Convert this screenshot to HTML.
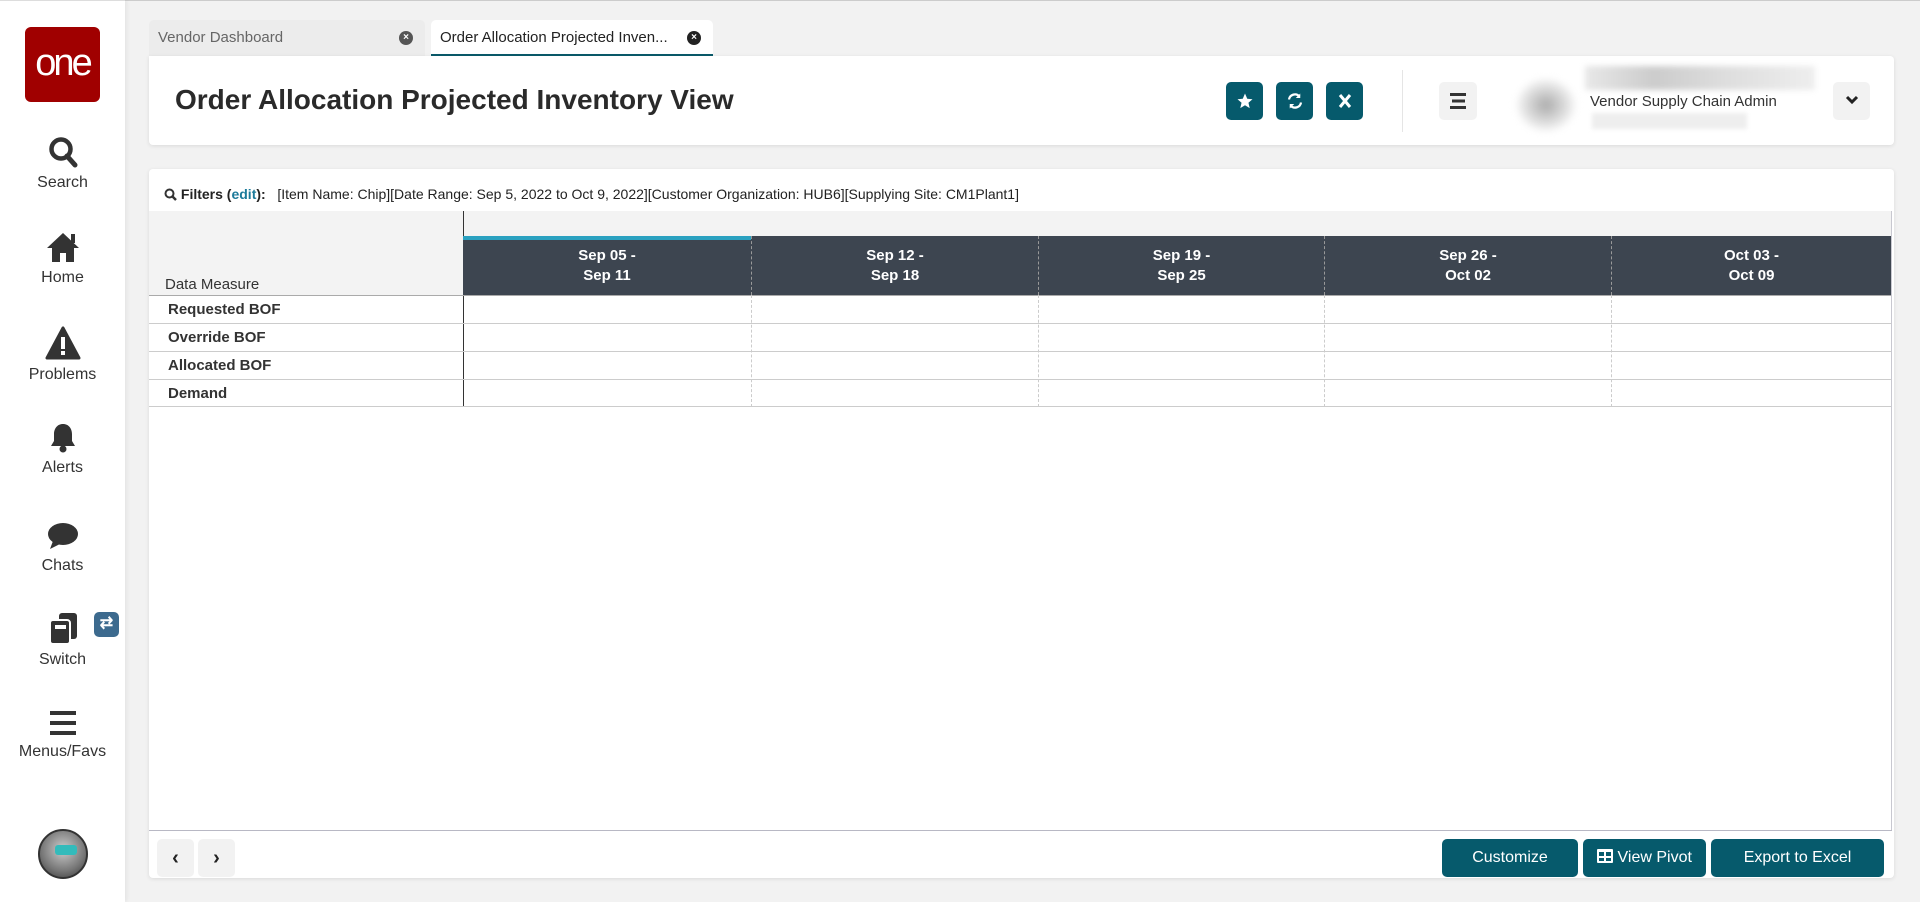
<!DOCTYPE html>
<html><head><meta charset="utf-8"><style>
*{box-sizing:border-box;margin:0;padding:0}
body{width:1920px;height:902px;background:#f2f2f2;font-family:"Liberation Sans",sans-serif;position:relative;overflow:hidden;color:#222}
.abs{position:absolute}
#side{left:0;top:0;width:125px;height:902px;background:#fff;border-top:1px solid #ddd;box-shadow:2px 0 4px rgba(0,0,0,.06)}
.logo{left:25px;top:26px;width:75px;height:75px;background:#a00000;border-radius:6px;color:#fff;font-size:38px;text-align:center;line-height:72px;letter-spacing:-3px}
.nav{left:0;width:125px;text-align:center;font-size:16px;color:#333}
.nav svg{display:block;margin:0 auto 6px}
.tab{top:20px;height:36px;border-radius:5px 5px 0 0;font-size:15px;line-height:36px;padding-left:9px;color:#666}
.x{position:absolute;right:12px;top:11px;width:14px;height:14px;border-radius:50%;background:#555;color:#fff;font-size:10px;line-height:14px;text-align:center;font-weight:bold}
.card{background:#fff;border-radius:4px;box-shadow:0 1px 4px rgba(0,0,0,.1)}
.tb{width:37px;height:38px;border-radius:5px;background:#065a6c;top:82px}
.tb svg{display:block;margin:10px auto}
.btn{top:839px;height:38px;background:#065a6c;border-radius:5px;color:#fff;font-size:16px;text-align:center;line-height:38px}
.col{top:236px;height:59px;color:#fff;font-weight:bold;font-size:15px;text-align:center;line-height:20px;padding-top:10px;border-left:1px dashed #999}
.rl{left:149px;width:1742px;height:1px;background:#ccc}
.vl{top:295px;height:112px;width:0;border-left:1px dashed #ccc}
.rt{left:168px;font-size:15px;font-weight:bold;color:#333}
</style></head><body>
<div class="abs" style="left:0;top:0;width:1920px;height:1px;background:#ccc"></div>
<div id="side" class="abs">
<div class="abs logo">one</div>
<div class="abs nav" style="top:135px"><svg width="30" height="32" viewBox="0 0 30 32"><circle cx="13" cy="13" r="9.5" fill="none" stroke="#333" stroke-width="4.5"/><path d="M19 20l8 9" stroke="#333" stroke-width="5" stroke-linecap="round"/></svg>Search</div>
<div class="abs nav" style="top:230px"><svg width="36" height="32" viewBox="0 0 36 32"><path d="M18 2L2 17h5v14h8v-9h6v9h8V17h5z" fill="#333"/><rect x="26" y="3" width="4" height="9" fill="#333"/></svg>Home</div>
<div class="abs nav" style="top:325px"><svg width="36" height="34" viewBox="0 0 36 34"><path d="M18 2L2 32h32z" fill="#333" stroke="#333" stroke-width="3" stroke-linejoin="round"/><rect x="16" y="11" width="4" height="12" fill="#fff"/><rect x="16" y="25" width="4" height="4" fill="#fff"/></svg>Problems</div>
<div class="abs nav" style="top:420px"><svg width="30" height="32" viewBox="0 0 30 32"><path d="M15 3c-6 0-9 5-9 10v7l-3 5h24l-3-5v-7c0-5-3-10-9-10z" fill="#333"/><circle cx="15" cy="28" r="3.5" fill="#333"/></svg>Alerts</div>
<div class="abs nav" style="top:520px"><svg width="32" height="30" viewBox="0 0 32 30"><ellipse cx="16" cy="13" rx="15" ry="11" fill="#333"/><path d="M6 20l-3 8 10-5z" fill="#333"/></svg>Chats</div>
<div class="abs nav" style="top:610px"><svg width="32" height="34" viewBox="0 0 32 34"><rect x="12" y="2" width="18" height="26" rx="3" fill="#333"/><rect x="3" y="9" width="20" height="24" rx="3" fill="#333" stroke="#fff" stroke-width="2"/><rect x="8" y="14" width="11" height="4" fill="#fff"/></svg>Switch</div>
<div class="abs" style="left:94px;top:611px;width:25px;height:25px;background:#3c6a8e;border-radius:5px;color:#fff;font-size:16px;text-align:center;line-height:24px;font-weight:bold">⇄</div>
<div class="abs nav" style="top:708px"><svg width="30" height="28" viewBox="0 0 30 28"><rect x="2" y="2" width="26" height="4" fill="#333"/><rect x="2" y="12" width="26" height="4" fill="#333"/><rect x="2" y="22" width="26" height="4" fill="#333"/></svg>Menus/Favs</div>
<div class="abs" style="left:38px;top:828px;width:50px;height:50px;border-radius:50%;background:radial-gradient(circle at 50% 40%,#ccc,#777 60%,#333);border:2px solid #333"><div class="abs" style="left:15px;top:14px;width:22px;height:10px;background:#3bb;border-radius:3px"></div></div>
</div>
<div class="abs tab" style="left:149px;width:276px;background:#ececec">Vendor Dashboard<span class="x">×</span></div>
<div class="abs tab" style="left:431px;width:282px;background:#fff;color:#222;border-bottom:2px solid #0a5a6a">Order Allocation Projected Inven...<span class="x" style="background:#222">×</span></div>
<div class="abs card" style="left:149px;top:56px;width:1745px;height:89px;border-radius:0 4px 4px 4px"></div>
<div class="abs" style="left:175px;top:84px;font-size:28px;font-weight:bold;color:#2a2a2a">Order Allocation Projected Inventory View</div>
<div class="abs tb" style="left:1226px"><svg width="18" height="18" viewBox="0 0 24 24"><path d="M12 2l3 7 7 .6-5.4 4.7 1.7 7.2L12 17.7 5.7 21.5l1.7-7.2L2 9.6 9 9z" fill="#fff"/></svg></div>
<div class="abs tb" style="left:1276px"><svg width="18" height="18" viewBox="0 0 24 24"><path d="M4 10a8 8 0 0 1 14-4M20 14a8 8 0 0 1-14 4" stroke="#fff" stroke-width="3" fill="none"/><path d="M19 2v6h-6zM5 22v-6h6z" fill="#fff"/></svg></div>
<div class="abs tb" style="left:1326px"><svg width="16" height="18" viewBox="0 0 16 18"><path d="M3 3l10 12M13 3L3 15" stroke="#fff" stroke-width="3"/></svg></div>
<div class="abs" style="left:1402px;top:70px;width:1px;height:62px;background:#e5e5e5"></div>
<div class="abs" style="left:1439px;top:82px;width:38px;height:38px;background:#f2f2f2;border-radius:5px"><svg width="18" height="16" viewBox="0 0 18 16" style="margin:11px 10px"><rect x="1" y="0" width="16" height="3" fill="#333"/><rect x="3" y="6.5" width="13" height="3" fill="#333"/><rect x="1" y="13" width="16" height="3" fill="#333"/></svg></div>
<div class="abs" style="left:1518px;top:80px;width:56px;height:50px;border-radius:50%;background:radial-gradient(#aaa,#e8e8e8 60%,#fff);filter:blur(4px)"></div>
<div class="abs" style="left:1585px;top:66px;width:230px;height:24px;background:linear-gradient(90deg,#e8e8e8,#ccc 30%,#ddd 60%,#eee);filter:blur(3px)"></div>
<div class="abs" style="left:1590px;top:93px;font-size:15px;color:#333">Vendor Supply Chain Admin</div>
<div class="abs" style="left:1592px;top:113px;width:155px;height:16px;background:#eee;filter:blur(2px)"></div>
<div class="abs" style="left:1833px;top:82px;width:37px;height:38px;background:#f2f2f2;border-radius:5px;text-align:center;line-height:38px"><svg width="14" height="10" viewBox="0 0 14 10"><path d="M2 2l5 5 5-5" stroke="#222" stroke-width="3" fill="none"/></svg></div>

<div class="abs card" style="left:149px;top:169px;width:1745px;height:709px"></div>
<div class="abs" style="left:164px;top:186px;font-size:14px;color:#222"><svg width="13" height="13" viewBox="0 0 13 13" style="vertical-align:-2px"><circle cx="5.5" cy="5.5" r="4" fill="none" stroke="#333" stroke-width="2"/><path d="M8.5 8.5l3.5 3.5" stroke="#333" stroke-width="2.5"/></svg> <b>Filters (<span style="color:#1c7a9a">edit</span>):</b> &nbsp; [Item Name: Chip][Date Range: Sep 5, 2022 to Oct 9, 2022][Customer Organization: HUB6][Supplying Site: CM1Plant1]</div>
<div class="abs" style="left:149px;top:211px;width:1742px;height:84px;background:#f3f3f3"></div>
<div class="abs" style="left:463px;top:211px;width:1px;height:196px;background:#333"></div>
<div class="abs" style="left:463px;top:236px;width:1428px;height:59px;background:#3d4550"></div>
<div class="abs" style="left:463px;top:236px;width:288px;height:4px;background:#2aa1c0"></div>
<div class="abs col" style="left:463px;width:288px;border-left:none">Sep 05 -<br>Sep 11</div>
<div class="abs col" style="left:751px;width:287px">Sep 12 -<br>Sep 18</div>
<div class="abs col" style="left:1038px;width:286px">Sep 19 -<br>Sep 25</div>
<div class="abs col" style="left:1324px;width:287px">Sep 26 -<br>Oct 02</div>
<div class="abs col" style="left:1611px;width:280px">Oct 03 -<br>Oct 09</div>
<div class="abs" style="left:165px;top:276px;font-size:15px;color:#333">Data Measure</div>
<div class="abs rl" style="top:295px;background:#aaa"></div>
<div class="abs rl" style="top:323px"></div>
<div class="abs rl" style="top:351px"></div>
<div class="abs rl" style="top:379px"></div>
<div class="abs rl" style="top:406px"></div>
<div class="abs vl" style="left:751px"></div><div class="abs vl" style="left:1038px"></div><div class="abs vl" style="left:1324px"></div><div class="abs vl" style="left:1611px"></div>
<div class="abs rt" style="top:301px">Requested BOF</div>
<div class="abs rt" style="top:329px">Override BOF</div>
<div class="abs rt" style="top:357px">Allocated BOF</div>
<div class="abs rt" style="top:385px">Demand</div>
<div class="abs" style="left:1891px;top:211px;width:1px;height:619px;background:#c8c8d0"></div>
<div class="abs" style="left:149px;top:830px;width:1743px;height:1px;background:#b8b8c4"></div>
<div class="abs" style="left:157px;top:839px;width:37px;height:38px;background:#f2f2f2;border-radius:5px;text-align:center;line-height:38px;font-weight:bold;font-size:20px">‹</div>
<div class="abs" style="left:198px;top:839px;width:37px;height:38px;background:#f2f2f2;border-radius:5px;text-align:center;line-height:38px;font-weight:bold;font-size:20px">›</div>
<div class="abs btn" style="left:1442px;width:136px">Customize</div>
<div class="abs btn" style="left:1583px;width:123px"><svg width="16" height="14" viewBox="0 0 16 14" style="vertical-align:-1px"><rect width="16" height="14" rx="1" fill="#fff"/><rect x="2" y="3" width="5" height="4" fill="#065a6c"/><rect x="9" y="3" width="5" height="4" fill="#065a6c"/><rect x="2" y="9" width="5" height="3" fill="#065a6c"/><rect x="9" y="9" width="5" height="3" fill="#065a6c"/></svg> View Pivot</div>
<div class="abs btn" style="left:1711px;width:173px">Export to Excel</div>
</body></html>
